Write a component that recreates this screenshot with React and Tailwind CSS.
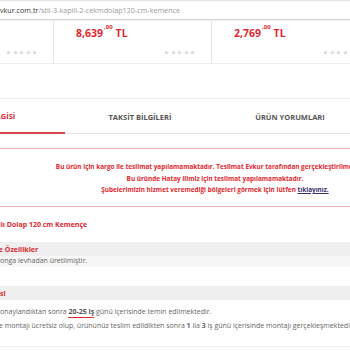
export default function App() {
  const red = "text-[#e1282f]";
  const Star = () => (
    <svg width="5" height="5" viewBox="0 0 10 10"><path d="M5 0.5l1.3 3 3.2.3-2.4 2.1.7 3.2L5 7.4 2.2 9.1l.7-3.2L.5 3.8l3.2-.3z" fill="#d8d8d8" /></svg>
  );
  const Stars = () => (
    <div className="flex gap-[1.5px]">
      <Star /><Star /><Star /><Star /><Star />
    </div>
  );
  const Card = ({ price, last }) => (
    <div className={`w-[158px] shrink-0 h-full flex flex-col justify-between pt-[7px] pb-[8px] pl-[22px] pr-[16px] ${last ? "" : "border-r border-[#e6e6e6]"}`}>
      <div className={`${red} font-bold text-[10.5px] leading-none h-[11px]`}>
        {price && (
          <>
            {price}
            <sup className="text-[6px] ml-[1px] align-top relative top-[-1px]">,00</sup>
            <span className="ml-[3px]">TL</span>
          </>
        )}
      </div>
      <div className="flex justify-end"><Stars /></div>
    </div>
  );
  // clipped-left text: prefix right-aligned in a box ending at a given x
  const Clip = ({ prefix, rest, endCls }) => (
    <div className="flex whitespace-pre">
      <div className={`shrink-0 flex justify-end ${endCls}`}>
        <span className="whitespace-pre">{prefix}</span>
      </div>
      <span className="whitespace-pre">{rest}</span>
    </div>
  );
  return (
    <div className="w-[350px] h-[350px] overflow-hidden bg-white" style={{ fontFamily: '"Open Sans", "Liberation Sans", sans-serif' }}>
      {/* URL bar */}
      <div className="h-[20px] border-t border-[#e2e2e2] border-b border-b-[#d8d8d8] flex items-center text-[7.2px] whitespace-nowrap shadow-[0_1px_1px_rgba(0,0,0,0.06)]">
        <span className="text-[#333]">vkur.com.tr</span>
        <span className="text-[#9a9a9a]">/stil-3-kapili-2-cekmdolap120-cm-kemence</span>
      </div>
      {/* Cards */}
      <div className="h-[43px] flex ml-[-104px] border-b border-[#ececec] mt-[1px]">
        <Card price="" />
        <Card price="8,639" />
        <Card price="2,769" last />
      </div>
      {/* Tabs */}
      <div className="mt-[34px] border-t border-[#ededed] border-b border-b-[#e4e4e4] flex ml-[-85px] h-[36px]">
        <div className="w-[150px] shrink-0 flex items-center justify-center pt-[3px] text-[7.5px] font-bold text-[#e1282f] border-b-2 border-[#d9474c] mb-[-1px]">ÜRÜN BİLGİSİ</div>
        <div className="w-[150px] shrink-0 flex items-center justify-center pt-[3px] text-[7.5px] font-bold text-[#555]">TAKSİT BİLGİLERİ</div>
        <div className="w-[150px] shrink-0 flex items-center justify-center pt-[3px] text-[7.5px] font-bold text-[#555]">ÜRÜN YORUMLARI</div>
      </div>
      {/* Notice */}
      <div className="mt-[14px] ml-[-220px] w-[870px] border-t border-b border-[#f3b9b9] h-[59px] flex flex-col items-center justify-center gap-[3.5px] pt-[2px] text-[6.4px] font-bold text-[#e1282f] leading-[8px] whitespace-nowrap">
        <div>Bu ürün için kargo ile teslimat yapılamamaktadır. Teslimat Evkur tarafından gerçekleştirilmektedir.</div>
        <div>Bu üründe Hatay ilimiz için teslimat yapılamamaktadır.</div>
        <div>Şubelerimizin hizmet veremediği bölgeleri görmek için lütfen <span className="text-[#3a2d6b] underline">tıklayınız.</span></div>
      </div>
      {/* Content */}
      <div className="mt-[13px] text-[7px] leading-[9px] whitespace-nowrap">
        <div className={`${red} font-bold`}>
          <Clip prefix="Stil 3 Kapılı 2 Çekmeceli Kapılı" rest=" Dolap 120 cm Kemençe" endCls="ml-[-200px] w-[205px]" />
        </div>
        <div className="mt-[13px] bg-[#efefef] h-[14px] flex items-center font-bold text-[#e1282f]">
          <Clip prefix="Ürün Boyutları ve" rest=" Özellikler" endCls="ml-[-200px] w-[203px]" />
        </div>
        <div className="bg-[#f7f7f7] h-[11px] text-[#666]">
          <Clip prefix="Ürün gövdesi 18 mm y" rest="onga levhadan üretilmiştir." endCls="ml-[-200px] w-[200px]" />
        </div>
        <div className="mt-[19px] bg-[#efefef] h-[14px] flex items-center font-bold text-[#e1282f]">
          <Clip prefix="Teslimat Bilgi" rest="si" endCls="ml-[-200px] w-[200px]" />
        </div>
        <div className="pt-[7px] text-[#666]">
          <Clip
            prefix="Siparişiniz "
            rest={<>onaylandıktan sonra <span className="font-bold text-[#555] relative inline-block">20-25 iş<span className="absolute left-0 right-0 bottom-[-2px] h-[1.5px] bg-[#e1282f]"></span></span> günü içerisinde temin edilmektedir.</>}
            endCls="ml-[-200px] w-[200px]"
          />
        </div>
        <div className="pt-[5px] text-[#666]">
          <Clip
            prefix="Ürünün teslimatı ve"
            rest={<> montajı ücretsiz olup, ürününüz teslim edildikten sonra <span className="font-bold">1</span> ila <span className="font-bold">3</span> iş günü içerisinde montajı gerçekleşmektedir.</>}
            endCls="ml-[-200px] w-[203px]"
          />
        </div>
        <div className="mt-[16px] border-t border-[#eeeeee]"></div>
      </div>
    </div>
  );
}
